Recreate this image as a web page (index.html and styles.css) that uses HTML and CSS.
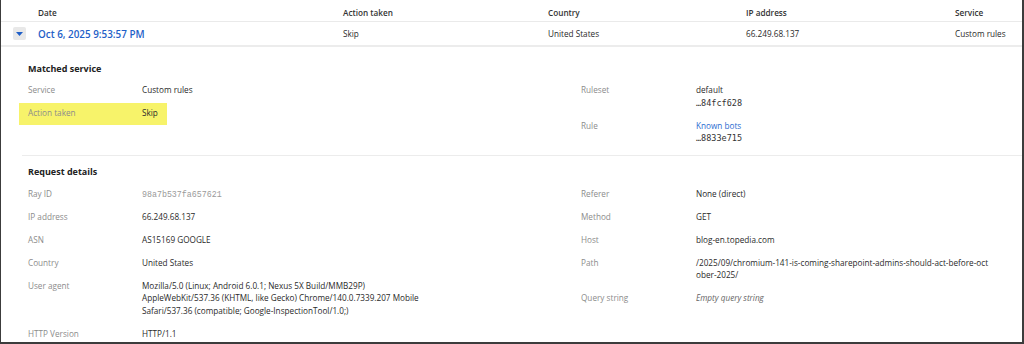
FILE: index.html
```html
<!DOCTYPE html>
<html lang="en">
<head>
    <meta charset="UTF-8">
    <meta name="viewport" content="width=device-width, initial-scale=1.0">
    <title>Security events</title>
    <link rel="stylesheet" href="styles.css">
</head>
<body>

<div class="frame">
    <!-- Column headers -->
    <div class="event-row event-head">
        <span></span>
        <span>Date</span>
        <span>Action taken</span>
        <span>Country</span>
        <span>IP address</span>
        <span>Service</span>
    </div>

    <!-- Expanded event -->
    <div class="event-row event-main">
        <button class="toggle" type="button" aria-label="Collapse">
            <svg width="7" height="4" viewBox="0 0 7 4"><path d="M0 0h7L3.5 4z" fill="#1f5fc8"/></svg>
        </button>
        <a class="event-date" href="#">Oct 6, 2025 9:53:57 PM</a>
        <span>Skip</span>
        <span>United States</span>
        <span>66.249.68.137</span>
        <span>Custom rules</span>
    </div>

    <section class="details">
        <h3>Matched service</h3>
        <div class="detail-cols">
            <div class="detail-col">
                <div class="field">
                    <span class="field-label">Service</span>
                    <span class="field-value">Custom rules</span>
                </div>
                <div class="field marked">
                    <span class="field-label">Action taken</span>
                    <span class="field-value">Skip</span>
                </div>
            </div>
            <div class="detail-col right">
                <div class="field">
                    <span class="field-label">Ruleset</span>
                    <span class="field-value">default<code class="id">…84fcf628</code></span>
                </div>
                <div class="field">
                    <span class="field-label">Rule</span>
                    <span class="field-value"><a href="#">Known bots</a><code class="id">…8833e715</code></span>
                </div>
            </div>
        </div>
    </section>

    <section class="details split">
        <h3>Request details</h3>
        <div class="detail-cols">
            <div class="detail-col">
                <div class="field">
                    <span class="field-label">Ray ID</span>
                    <span class="field-value"><code class="ray">98a7b537fa657621</code></span>
                </div>
                <div class="field">
                    <span class="field-label">IP address</span>
                    <span class="field-value">66.249.68.137</span>
                </div>
                <div class="field">
                    <span class="field-label">ASN</span>
                    <span class="field-value">AS15169 GOOGLE</span>
                </div>
                <div class="field">
                    <span class="field-label">Country</span>
                    <span class="field-value">United States</span>
                </div>
                <div class="field">
                    <span class="field-label">User agent</span>
                    <span class="field-value">Mozilla/5.0 (Linux; Android 6.0.1; Nexus 5X Build/MMB29P)<br>AppleWebKit/537.36 (KHTML, like Gecko) Chrome/140.0.7339.207 Mobile<br>Safari/537.36 (compatible; Google-InspectionTool/1.0;)</span>
                </div>
                <div class="field">
                    <span class="field-label">HTTP Version</span>
                    <span class="field-value">HTTP/1.1</span>
                </div>
            </div>
            <div class="detail-col right">
                <div class="field">
                    <span class="field-label">Referer</span>
                    <span class="field-value">None (direct)</span>
                </div>
                <div class="field">
                    <span class="field-label">Method</span>
                    <span class="field-value">GET</span>
                </div>
                <div class="field">
                    <span class="field-label">Host</span>
                    <span class="field-value">blog-en.topedia.com</span>
                </div>
                <div class="field">
                    <span class="field-label">Path</span>
                    <span class="field-value">/2025/09/chromium-141-is-coming-sharepoint-admins-should-act-before-oct<br>ober-2025/</span>
                </div>
                <div class="field">
                    <span class="field-label">Query string</span>
                    <span class="field-value empty">Empty query string</span>
                </div>
            </div>
        </div>
    </section>
</div>

</body>
</html>
```

FILE: styles.css
```css
body {
    margin: 0;
    font-family: "Open Sans", Arial, sans-serif;
    font-size: 8.2px;
    color: #2a2a2a;
    background: #fff;
}

.frame {
    height: 344px;
    box-sizing: border-box;
    border-left: 1px solid #3c3c3c;
    border-right: 2px solid #3c3c3c;
    border-bottom: 2px solid #3c3c3c;
    overflow: hidden;
}

/* table rows */
.event-row {
    display: grid;
    grid-template-columns: 25px 305px 205px 198px 209px 1fr;
    align-items: center;
    padding-left: 12px;
}

.event-head {
    height: 22px;
    box-sizing: border-box;
    padding-top: 3px;
    font-weight: 600;
    color: #333;
    border-bottom: 1px solid #eaeaea;
}

.event-main {
    height: 23px;
    border-bottom: 2px solid #ececec;
}

.toggle {
    width: 13px;
    height: 13px;
    padding: 0;
    border: none;
    border-radius: 2px;
    background: #e8e8e8;
    display: flex;
    align-items: center;
    justify-content: center;
    cursor: pointer;
}

.event-date {
    color: #1f5fc8;
    font-weight: 600;
    font-size: 9.9px;
    text-decoration: none;
}

/* expanded details */
.details {
    padding: 15px 0 10px 27px;
}

.details h3 {
    margin: 0 0 9px;
    font-size: 9px;
    line-height: 13px;
    font-weight: 700;
    color: #222;
}

.details.split {
    margin-left: 21px;
    padding-left: 6px;
    padding-top: 9px;
    border-top: 1px solid #ececec;
}

.details.split h3 {
    margin-bottom: 10px;
}

.detail-cols {
    display: grid;
    grid-template-columns: 553px 1fr;
}

.detail-col {
    display: flex;
    flex-direction: column;
    gap: 10.5px;
}

.field {
    display: flex;
    line-height: 12.5px;
}

.field-label {
    width: 114px;
    flex: none;
    color: #8c8c8c;
}

.right .field-label {
    width: 115px;
}

.field-value a {
    color: #2a6bd0;
    text-decoration: none;
}

.field.marked {
    align-self: flex-start;
    background: #f7f36a;
    margin: -4.5px 0 -5px -9px;
    padding: 4.5px 9px 5px;
}

.id {
    display: block;
    font-family: "DejaVu Sans Mono", monospace;
    font-size: 8.5px;
    color: #333;
}

.ray {
    font-family: "Liberation Mono", monospace;
    font-size: 8.3px;
    line-height: 1;
    color: #9a9a9a;
}

.empty {
    font-style: italic;
    color: #666;
}
```
